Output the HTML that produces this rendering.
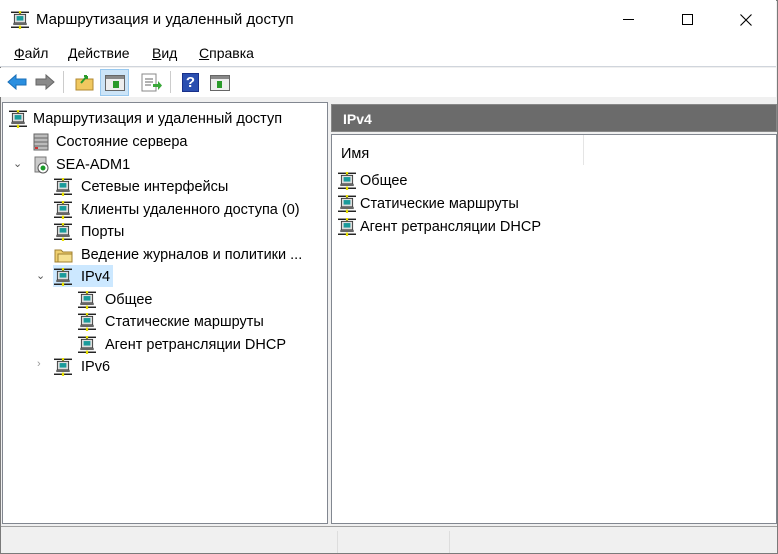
<!DOCTYPE html>
<html><head><meta charset="utf-8">
<style>
*{margin:0;padding:0;box-sizing:border-box}
body{width:778px;height:554px;overflow:hidden;background:#f0f0f0;font-family:"Liberation Sans","Noto Sans CJK JP",sans-serif;font-size:14px;color:#000;position:relative}
.win{position:absolute;left:0;top:0;width:778px;height:554px;border:1px solid #7a7a7a;}
.abs{position:absolute}
.title{left:0;top:0;width:776px;height:40px;background:#fff}
.menu{left:0;top:40px;width:776px;height:27px;background:#fff;border-bottom:1px solid #d0d5dc}
.menu span{position:absolute;top:5px;font-size:14px}
.tb{left:0;top:68px;width:776px;height:29px;background:#fff}
.pane{background:#fff;border:1px solid #828790}
.row{position:absolute;height:22px;line-height:22px;white-space:nowrap;font-size:14.5px}
.row span{top:1px}
.row svg{position:absolute;top:3px}
.chev{position:absolute;font-size:11px;color:#555}
</style></head><body>
<svg width="0" height="0" style="position:absolute">
<defs>
<symbol id="net" viewBox="0 0 16 16">
<rect x="0" y="0.5" width="16" height="1.3" fill="#222"/>
<rect x="7" y="0" width="2" height="2.5" fill="#e8e000"/>
<rect x="7.4" y="2" width="1.2" height="1.5" fill="#444"/>
<rect x="3" y="3" width="10" height="7.5" fill="#ddd" stroke="#333" stroke-width="0.8"/>
<rect x="5" y="4.5" width="6" height="4" fill="#1a9b9b"/>
<rect x="2" y="10.5" width="12" height="2" fill="#666"/>
<rect x="0" y="13.8" width="16" height="1.3" fill="#222"/>
<rect x="7" y="13" width="2" height="3" fill="#e8e000"/>
</symbol>
</defs></svg>
<div class="win"></div>
<div class="abs title">
 <svg class="abs" style="left:11px;top:11px" width="18" height="18"><use href="#net"/></svg>
 <span class="abs" style="left:36px;top:11px;font-size:15px">Маршрутизация и удаленный доступ</span>
 <div class="abs" style="left:623px;top:19px;width:11px;height:1px;background:#000"></div>
 <div class="abs" style="left:682px;top:14px;width:11px;height:11px;border:1px solid #000"></div>
 <svg class="abs" style="left:740px;top:14px" width="12" height="12"><path d="M0.5 0.5L11.5 11.5M11.5 0.5L0.5 11.5" stroke="#000" stroke-width="1.1"/></svg>
</div>
<div class="abs menu">
 <span style="left:14px"><u>Ф</u>айл</span>
 <span style="left:68px"><u>Д</u>ействие</span>
 <span style="left:152px"><u>В</u>ид</span>
 <span style="left:199px"><u>С</u>правка</span>
</div>
<div class="abs tb">
 <svg class="abs" style="left:7px;top:6px" width="20" height="16"><path d="M1 8L9 1V5H19V11H9V15Z" fill="#2a8fe0" stroke="#1a6fb8"/></svg>
 <svg class="abs" style="left:35px;top:6px" width="20" height="16"><path d="M19 8L11 1V5H1V11H11V15Z" fill="#8a8a8a" stroke="#666"/></svg>
 <div class="abs" style="left:63px;top:3px;width:1px;height:22px;background:#ccc"></div>
 <svg class="abs" style="left:75px;top:5px" width="20" height="18"><rect x="1" y="6" width="17" height="11" fill="#f0c860" stroke="#b08830"/><path d="M6 10L12 3M12 3L9 3M12 3L12 6" stroke="#2a9a2a" stroke-width="2" fill="none"/></svg>
 <div class="abs" style="left:100px;top:1px;width:29px;height:27px;background:#cce4f7;border:1px solid #99c9ef"></div>
 <svg class="abs" style="left:105px;top:7px" width="20" height="16"><rect x="0.5" y="0.5" width="19" height="15" fill="#eee" stroke="#666"/><rect x="1" y="1" width="18" height="3" fill="#888"/><rect x="8" y="6" width="6" height="7" fill="#2a9a2a"/></svg>
 <svg class="abs" style="left:141px;top:5px" width="22" height="20"><rect x="1" y="1" width="14" height="17" fill="#fff" stroke="#888"/><path d="M4 6h8M4 9h8M4 12h6" stroke="#666"/><path d="M12 11h5v-3l4 4.5l-4 4.5v-3h-5z" fill="#3aa83a"/></svg>
 <div class="abs" style="left:170px;top:3px;width:1px;height:22px;background:#ccc"></div>
 <div class="abs" style="left:182px;top:5px;width:17px;height:19px;background:#2b4fb0;border:1px solid #18308a;color:#fff;font-weight:bold;font-size:15px;text-align:center;line-height:18px">?</div>
 <svg class="abs" style="left:210px;top:7px" width="20" height="16"><rect x="0.5" y="0.5" width="19" height="15" fill="#eee" stroke="#666"/><rect x="1" y="1" width="18" height="3" fill="#888"/><rect x="7" y="6" width="5" height="7" fill="#2a9a2a"/></svg>
</div>

<div class="abs pane" style="left:2px;top:102px;width:326px;height:422px">
 <div class="row" style="left:6px;top:4px"><svg style="left:0" width="18" height="18"><use href="#net"/></svg><span style="position:absolute;left:24px">Маршрутизация и удаленный доступ</span></div>
 <div class="row" style="left:29px;top:27px"><svg style="left:0" width="18" height="18"><rect x="2" y="1" width="14" height="16" fill="#bbb" stroke="#666"/><path d="M2 5h14M2 9h14M2 13h14" stroke="#666"/><rect x="3" y="14" width="3" height="2" fill="#c33"/></svg><span style="position:absolute;left:24px">Состояние сервера</span></div>
 <div class="chev" style="left:10px;top:54px">⌄</div>
 <div class="row" style="left:29px;top:50px"><svg style="left:0" width="18" height="18"><rect x="3" y="1" width="11" height="15" fill="#ccc" stroke="#777"/><circle cx="11" cy="12" r="5" fill="#fff" stroke="#555"/><circle cx="11" cy="12" r="2.5" fill="#1a9a2a"/></svg><span style="position:absolute;left:24px">SEA-ADM1</span></div>
 <div class="row" style="left:51px;top:72px"><svg style="left:0" width="18" height="18"><use href="#net"/></svg><span style="position:absolute;left:27px">Сетевые интерфейсы</span></div>
 <div class="row" style="left:51px;top:95px"><svg style="left:0" width="18" height="18"><use href="#net"/></svg><span style="position:absolute;left:27px">Клиенты удаленного доступа (0)</span></div>
 <div class="row" style="left:51px;top:117px"><svg style="left:0" width="18" height="18"><use href="#net"/></svg><span style="position:absolute;left:27px">Порты</span></div>
 <div class="row" style="left:51px;top:140px"><svg style="left:0" width="20" height="18"><path d="M1 4h6l2 2h9v10H1z" fill="#f0d070" stroke="#a08030"/><rect x="4" y="8" width="14" height="8" fill="#f5e090" stroke="#a08030"/></svg><span style="position:absolute;left:27px">Ведение журналов и политики ...</span></div>
 <div class="chev" style="left:33px;top:166px">⌄</div>
 <div class="abs" style="left:50px;top:162px;width:60px;height:22px;background:#cce8ff"></div>
 <div class="row" style="left:51px;top:162px"><svg style="left:0" width="18" height="18"><use href="#net"/></svg><span style="position:absolute;left:27px">IPv4</span></div>
 <div class="row" style="left:75px;top:185px"><svg style="left:0" width="18" height="18"><use href="#net"/></svg><span style="position:absolute;left:27px">Общее</span></div>
 <div class="row" style="left:75px;top:207px"><svg style="left:0" width="18" height="18"><use href="#net"/></svg><span style="position:absolute;left:27px">Статические маршруты</span></div>
 <div class="row" style="left:75px;top:230px"><svg style="left:0" width="18" height="18"><use href="#net"/></svg><span style="position:absolute;left:27px">Агент ретрансляции DHCP</span></div>
 <div class="chev" style="left:34px;top:255px;color:#999">›</div>
 <div class="row" style="left:51px;top:252px"><svg style="left:0" width="18" height="18"><use href="#net"/></svg><span style="position:absolute;left:27px">IPv6</span></div>
</div>

<div class="abs" style="left:331px;top:104px;width:446px;height:28px;background:#6b6b6b;border:1px solid #888"><span class="abs" style="left:11px;top:6px;color:#fff;font-weight:bold;font-size:14px">IPv4</span></div>
<div class="abs pane" style="left:331px;top:134px;width:446px;height:390px">
 <span class="abs" style="left:9px;top:11px;font-size:14.5px">Имя</span>
 <div class="abs" style="left:251px;top:0;width:1px;height:30px;background:#e5e5e5"></div>
 <div class="row" style="left:6px;top:34px"><svg style="left:0" width="18" height="18"><use href="#net"/></svg><span style="position:absolute;left:22px">Общее</span></div>
 <div class="row" style="left:6px;top:57px"><svg style="left:0" width="18" height="18"><use href="#net"/></svg><span style="position:absolute;left:22px">Статические маршруты</span></div>
 <div class="row" style="left:6px;top:80px"><svg style="left:0" width="18" height="18"><use href="#net"/></svg><span style="position:absolute;left:22px">Агент ретрансляции DHCP</span></div>
</div>

<div class="abs" style="left:1px;top:526px;width:776px;height:27px;background:#f0f0f0;border-top:1px solid #a0a0a0">
 <div class="abs" style="left:336px;top:4px;width:1px;height:22px;background:#ddd"></div>
 <div class="abs" style="left:448px;top:4px;width:1px;height:22px;background:#ddd"></div>
</div>
</body></html>
